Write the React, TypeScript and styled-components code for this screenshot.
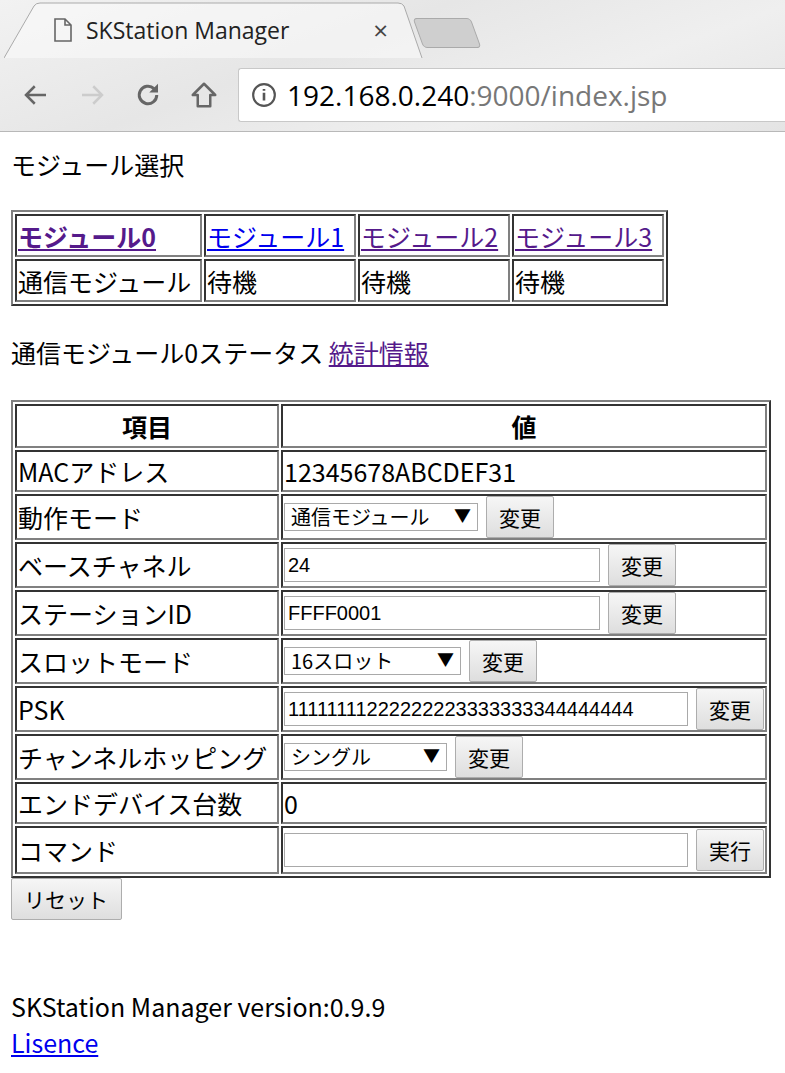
import React from "react";
import styled, { createGlobalStyle } from "styled-components";

const G = createGlobalStyle`
  body { margin: 0; background: #fff; font-family: "Noto Sans CJK JP", "Liberation Sans", sans-serif; }
`;
const Chrome = styled.div`
  height: 131px; background: linear-gradient(160deg, #f2f2f2 0%, #e6e6e6 40%, #efefef 70%, #e4e4e4 100%);
  border-bottom: 1px solid #b8b8b8; display: flex; flex-direction: column;
`;
const TabBar = styled.div`height: 58px; display: flex; align-items: flex-end; padding-left: 4px; position: relative;`;
const Tab = styled.div`
  position: relative; width: 420px; height: 56px; display: flex; align-items: center; padding-left: 50px; box-sizing: border-box;
  font-family: "Open Sans", "Liberation Sans", sans-serif; font-size: 23px; color: #222;
`;
const TabShape = styled.svg`position: absolute; left: 0; top: 0; z-index: 0;`;
const TabText = styled.span`position: relative; z-index: 1; display: flex; align-items: center; gap: 14px; width: 100%;`;
const Close = styled.span`margin-left: auto; margin-right: 36px; font-size: 26px; color: #444;`;
const NewTab = styled.div`
  width: 56px; height: 28px; margin-left: -6px; margin-bottom: 10px; background: #cfcfcf; border: 1px solid #aaa;
  border-radius: 4px; transform: skewX(20deg);
`;
const Toolbar = styled.div`flex: 1; display: flex; align-items: center; padding-left: 8px;`;
const NavBtn = styled.div`width: 56px; display: flex; justify-content: center;`;
const Omni = styled.div`
  margin-left: 6px; flex: 1; height: 52px; background: #fff; border: 1px solid #c8c8c8; border-right: none; border-radius: 3px 0 0 3px;
  display: flex; align-items: center; padding-left: 12px; gap: 10px;
  font-family: "Open Sans", "Liberation Sans", sans-serif; font-size: 28px; color: #000;
`;
const Gray = styled.span`color: #777;`;
const Page = styled.div`padding: 14px 11px; font-size: 25px; color: #000; line-height: 36px;`;
const P = styled.div`margin-bottom: 28px;`;
const Tbl = styled.table`
  border: 2px solid; border-color: #808080 #333 #333 #808080; border-spacing: 2px; border-collapse: separate; margin-bottom: 28px;
`;
const Td = styled.td<{ w?: number; h?: number; center?: boolean; bold?: boolean }>`
  border: 2px solid; border-color: #333 #808080 #808080 #333; padding: 0 1px;
  width: ${p => p.w ? p.w + "px" : "auto"}; height: ${p => p.h || 40}px;
  text-align: ${p => p.center ? "center" : "left"}; font-weight: ${p => p.bold ? 700 : 400}; white-space: nowrap;
`;
const A = styled.a<{ visited?: boolean; bold?: boolean }>`
  color: ${p => p.visited ? "#551a8b" : "#0000ee"}; text-decoration: underline; font-weight: ${p => p.bold ? 700 : 400};
`;
const Cell = styled.div`display: flex; align-items: center; gap: 8px;`;
const Input = styled.div<{ w: number }>`
  width: ${p => p.w}px; height: 34px; border: 1px solid #a9a9a9; box-sizing: border-box; display: flex; align-items: center; padding-left: 3px;
  font-family: "Liberation Sans", sans-serif; font-size: 20px;
`;
const Select = styled.div<{ w: number }>`
  width: ${p => p.w}px; height: 28px; border: 1px solid #a9a9a9; box-sizing: border-box; display: flex; align-items: center; padding: 0 6px;
  font-size: 20px; justify-content: space-between; line-height: 1;
`;
const Arrow = styled.span`font-size: 17px; align-self: flex-start; margin-top: 2px;`;
const Btn = styled.div`
  height: 42px; padding: 0 12px; border: 1px solid #adadad; border-radius: 2px; background: linear-gradient(#f6f6f6, #dedede);
  display: flex; align-items: center; font-size: 21px; box-sizing: border-box;
`;

const rows: [string, React.ReactNode, number][] = [
  ["MACアドレス", "12345678ABCDEF31", 38],
  ["動作モード", <Cell><Select w={194}>通信モジュール<Arrow>▼</Arrow></Select><Btn>変更</Btn></Cell>, 42],
  ["ベースチャネル", <Cell><Input w={316}>24</Input><Btn>変更</Btn></Cell>, 42],
  ["ステーションID", <Cell><Input w={316}>FFFF0001</Input><Btn>変更</Btn></Cell>, 42],
  ["スロットモード", <Cell><Select w={177}>16スロット<Arrow>▼</Arrow></Select><Btn>変更</Btn></Cell>, 42],
  ["PSK", <Cell><Input w={404}>11111111222222223333333344444444</Input><Btn>変更</Btn></Cell>, 42],
  ["チャンネルホッピング", <Cell><Select w={163}>シングル<Arrow>▼</Arrow></Select><Btn>変更</Btn></Cell>, 42],
  ["エンドデバイス台数", "0", 38],
  ["コマンド", <Cell><Input w={404}></Input><Btn>実行</Btn></Cell>, 44],
];

export default function App() {
  return (
    <>
      <G />
      <Chrome>
        <TabBar>
          <Tab>
            <TabShape width="420" height="56" viewBox="0 0 420 56">
              <path d="M0 56 L30 4 Q32 1 36 1 L394 1 Q398 1 400 4 L418 56" fill="rgba(250,250,250,0.6)" stroke="#aaa" strokeWidth="1" />
            </TabShape>
            <TabText>
              <svg width="18" height="24" viewBox="0 0 18 24"><path d="M1 1h10l6 6v16H1z M11 1v6h6" fill="none" stroke="#666" strokeWidth="1.6" /></svg>
              SKStation Manager
              <Close>×</Close>
            </TabText>
          </Tab>
          <NewTab />
        </TabBar>
        <Toolbar>
          <NavBtn><svg width="30" height="30" viewBox="0 0 24 24"><path d="M20 12H5M11 5l-7 7 7 7" fill="none" stroke="#666" strokeWidth="2" /></svg></NavBtn>
          <NavBtn><svg width="30" height="30" viewBox="0 0 24 24"><path d="M4 12h15M13 5l7 7-7 7" fill="none" stroke="#ccc" strokeWidth="2" /></svg></NavBtn>
          <NavBtn><svg width="30" height="30" viewBox="0 0 24 24"><path d="M19 12a7 7 0 1 1-2.2-5.1" fill="none" stroke="#666" strokeWidth="2.4" /><path d="M20 3v7h-7z" fill="#666" /></svg></NavBtn>
          <NavBtn><svg width="30" height="30" viewBox="0 0 24 24"><path d="M12 3L3 12h4v9h10v-9h4z" fill="none" stroke="#666" strokeWidth="2" strokeLinejoin="round" /></svg></NavBtn>
          <Omni>
            <svg width="26" height="26" viewBox="0 0 24 24"><circle cx="12" cy="12" r="10" fill="none" stroke="#555" strokeWidth="2" /><path d="M12 10v7M12 6.5v1.5" stroke="#555" strokeWidth="2.4" /></svg>
            <span>192.168.0.240<Gray>:9000/index.jsp</Gray></span>
          </Omni>
        </Toolbar>
      </Chrome>
      <Page>
        <P>モジュール選択</P>
        <Tbl>
          <tbody>
            <tr>
              <Td w={181} h={39}><A visited bold href="#">モジュール0</A></Td>
              <Td w={146} h={39}><A href="#">モジュール1</A></Td>
              <Td w={146} h={39}><A visited href="#">モジュール2</A></Td>
              <Td w={146} h={39}><A visited href="#">モジュール3</A></Td>
            </tr>
            <tr>
              <Td h={39}>通信モジュール</Td><Td h={39}>待機</Td><Td h={39}>待機</Td><Td h={39}>待機</Td>
            </tr>
          </tbody>
        </Tbl>
        <P style={{ marginBottom: 30 }}>通信モジュール0ステータス <A visited href="#">統計情報</A></P>
        <Tbl style={{ marginBottom: 0, width: 760 }}>
          <tbody>
            <tr><Td w={258} h={40} center bold>項目</Td><Td h={40} center bold>値</Td></tr>
            {rows.map(([k, v, h]) => (
              <tr key={k}><Td h={h}>{k}</Td><Td h={h}>{v}</Td></tr>
            ))}
          </tbody>
        </Tbl>
        <Btn style={{ width: 111, marginBottom: 68 }}>リセット</Btn>
        <div>SKStation Manager version:0.9.9</div>
        <A href="#">Lisence</A>
      </Page>
    </>
  );
}
